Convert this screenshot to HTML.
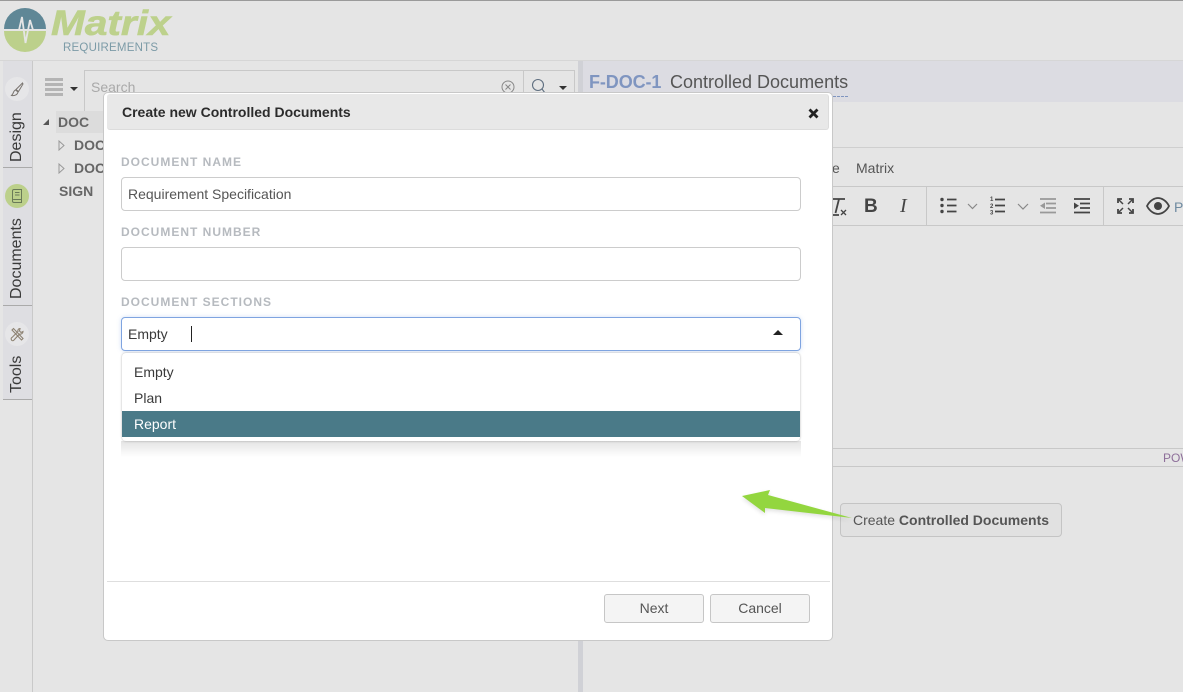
<!DOCTYPE html>
<html>
<head>
<meta charset="utf-8">
<style>
html,body{margin:0;padding:0;}
body{width:1183px;height:692px;overflow:hidden;position:relative;background:#e5e5e5;font-family:"Liberation Sans",sans-serif;color:#333;font-size:14px;}
.a{position:absolute;white-space:nowrap;}
.vt{position:absolute;white-space:nowrap;transform:rotate(-90deg);transform-origin:0 0;font-size:16px;line-height:18px;color:#3a3a3a;}
.lab{position:absolute;left:121px;font-size:12px;font-weight:bold;letter-spacing:1px;color:#b6babf;line-height:14px;}
.inp{position:absolute;left:121px;width:678px;height:32px;background:#fff;border:1px solid #ccc;border-radius:4px;}
.btn{position:absolute;top:594px;width:98px;height:27px;border:1px solid #c6c6c6;border-radius:3px;background:#f4f4f4;text-align:center;line-height:27px;color:#555;font-size:14px;}
.opt{position:absolute;left:134px;font-size:14px;line-height:16px;color:#3a3a3a;}
</style>
</head>
<body>
<div class="a" style="left:0;top:0;width:1183px;height:1px;background:#9a9a9a"></div>
<div class="a" style="left:0;top:60px;width:1183px;height:1px;background:#d6d6d6"></div>

<!-- logo -->
<svg class="a" style="left:0;top:4px" width="50" height="50" viewBox="0 0 50 50">
<path d="M4 27A21 21 0 0 0 46 27Z" fill="#bcd08b"/>
<path d="M4 25A21 21 0 0 1 46 25Z" fill="#5f8796"/>
<path d="M4 26H19L22 13 25.500 39 30 16 33 26H46" fill="#5f8796" fill-opacity="0" stroke="#e5e5e5" stroke-width="1.800" stroke-linejoin="miter"/>
</svg>
<div class="a" style="left:51px;top:5px;font-size:35px;line-height:38px;font-weight:bold;font-style:italic;color:#bdd18c;transform:scaleX(1.16);transform-origin:0 0;-webkit-text-stroke:.6px #bdd18c">Matrix</div>
<div class="a" style="left:63px;top:42px;font-size:11.5px;line-height:12px;color:#7c9ba7;letter-spacing:.22px">REQUIREMENTS</div>

<!-- sidebar -->
<div class="a" style="left:3px;top:61px;width:29px;height:339px;background:#dedee2"></div>
<div class="a" style="left:32px;top:61px;width:1px;height:631px;background:#c9c9c9"></div>
<div class="a" style="left:3px;top:167px;width:29px;height:1px;background:#aaa"></div>
<div class="a" style="left:3px;top:305px;width:29px;height:1px;background:#aaa"></div>
<div class="a" style="left:3px;top:399px;width:29px;height:1px;background:#aaa"></div>
<div class="a" style="left:5px;top:77px;width:24px;height:24px;border-radius:50%;background:#e6e6e8"></div>
<div class="a" style="left:5px;top:184px;width:24px;height:24px;border-radius:50%;background:#bcd08b"></div>
<div class="a" style="left:5px;top:322px;width:24px;height:24px;border-radius:50%;background:#e6e6e8"></div>
<svg class="a" style="left:5px;top:77px" width="24" height="24" viewBox="0 0 24 24" fill="none" stroke="#7a7570" stroke-width="1"><path d="M17.500 6 18 7 13.500 14.500 11 12.500ZM10.500 13C9 13.500 8.500 15 8 16.500 7.500 17.500 7 18 6.500 18.500 9 19 12.500 18 13 15Z"/></svg>
<svg class="a" style="left:5px;top:184px" width="24" height="24" viewBox="0 0 24 24" fill="none" stroke="#6a7a58" stroke-width="1"><path d="M7.500 7C7.500 6 8 5.500 9 5.500H16.500V18.500H9C8 18.500 7.500 18 7.500 17ZM7.500 16C7.500 15.500 8 15.500 9 15.500H16.500M10 8.500H14.500M10 11H14.500"/></svg>
<svg class="a" style="left:5px;top:322px" width="24" height="24" viewBox="0 0 24 24" fill="none" stroke="#8d8272" stroke-width="1.100"><path d="M7 8 8.500 6.500 18 16.500 16.500 18ZM15 6.500C13.500 6.500 12.500 8 13 9.500L7 15.500C6 15.500 6 17 6.500 18S8.500 19 9 18L14.500 12C16 12.500 18 11.500 18 9.500L16 10.500 14.500 9Z"/></svg>
<div class="vt" style="left:8px;top:162px">Design</div>
<div class="vt" style="left:8px;top:299px">Documents</div>
<div class="vt" style="left:8px;top:393px">Tools</div>

<!-- tree toolbar -->
<div class="a" style="left:45px;top:78px;width:18px;height:3px;background:#b4b4b4;box-shadow:0 5px 0 #b4b4b4,0 10px 0 #b4b4b4,0 15px 0 #b4b4b4"></div>
<div class="a" style="left:70px;top:87px;width:0;height:0;border:4px solid transparent;border-top-color:#333;border-bottom:0"></div>
<div class="a" style="left:84px;top:70px;width:489px;height:40px;border:1px solid #c8c8c8;box-sizing:content-box"></div>
<div class="a" style="left:91px;top:79px;font-size:14px;line-height:16px;color:#a9a9a9">Search</div>
<div class="a" style="left:523px;top:70px;width:1px;height:30px;background:#c8c8c8"></div>
<svg class="a" style="left:500px;top:79px" width="16" height="16" viewBox="0 0 16 16" fill="none" stroke="#888"><circle cx="8" cy="8" r="6"/><path d="M5.500 5.500 10.500 10.500M10.500 5.500 5.500 10.500"/></svg>
<svg class="a" style="left:530px;top:78px" width="18" height="18" viewBox="0 0 18 18" fill="none" stroke="#5f6f80" stroke-width="1.100"><circle cx="8" cy="7" r="5.500"/><path d="M12 11 15 15"/></svg>
<div class="a" style="left:559px;top:86px;width:0;height:0;border:4px solid transparent;border-top-color:#333;border-bottom:0"></div>

<!-- tree -->
<div class="a" style="left:56px;top:111px;width:60px;height:22px;background:#dcdcdc"></div>
<div class="a" style="left:43px;top:119px;width:0;height:0;border-style:solid;border-width:0 0 6px 6px;border-color:transparent transparent #555 transparent"></div>
<div class="a" style="left:58px;top:114px;font-size:14px;line-height:16px;font-weight:bold;color:#666">DOC</div>
<svg class="a" style="left:58px;top:140px" width="8" height="11"><path d="M1 1 6 5.500 1 10Z" fill="none" stroke="#999"/></svg>
<svg class="a" style="left:58px;top:163px" width="8" height="11"><path d="M1 1 6 5.500 1 10Z" fill="none" stroke="#999"/></svg>
<div class="a" style="left:74px;top:137px;font-size:14px;line-height:16px;font-weight:bold;color:#666">DOC</div>
<div class="a" style="left:74px;top:160px;font-size:14px;line-height:16px;font-weight:bold;color:#666">DOC</div>
<div class="a" style="left:59px;top:183px;font-size:14px;line-height:16px;font-weight:bold;color:#666">SIGN</div>

<!-- splitter -->
<div class="a" style="left:578px;top:61px;width:5px;height:631px;background:#d0d1d6"></div>

<!-- right panel -->
<div class="a" style="left:583px;top:61px;width:600px;height:41px;background:#dcdce2"></div>
<div class="a" style="left:589px;top:72px;font-size:18px;line-height:20px;font-weight:bold;color:#7f95c0;letter-spacing:-.1px">F-DOC-1</div>
<div class="a" style="left:670px;top:72px;font-size:18px;line-height:20px;color:#555">Controlled Documents</div>
<div class="a" style="left:833px;top:96px;width:15px;border-top:1px dashed #7f95c0"></div>
<div class="a" style="left:832px;top:147px;width:351px;height:1px;background:#cfcfcf"></div>
<div class="a" style="left:832px;top:186px;width:351px;height:1px;background:#c8c8c8"></div>
<div class="a" style="left:832px;top:225px;width:351px;height:1px;background:#c8c8c8"></div>
<div class="a" style="left:832px;top:448px;width:351px;height:1px;background:#c8c8c8"></div>
<div class="a" style="left:832px;top:466px;width:351px;height:1px;background:#c8c8c8"></div>
<div class="a" style="left:926px;top:186px;width:1px;height:39px;background:#c8c8c8"></div>
<div class="a" style="left:1103px;top:186px;width:1px;height:39px;background:#c8c8c8"></div>
<div class="a" style="left:832px;top:160px;font-size:14px;line-height:16px;color:#555">e</div>
<div class="a" style="left:856px;top:160px;font-size:14px;line-height:16px;color:#555">Matrix</div>
<div class="a" style="left:1163px;top:451px;font-size:12px;line-height:14px;color:#8e6f9a">POW</div>
<svg class="a" style="left:832px;top:190px" width="351" height="32" viewBox="0 0 351 32">
<path d="M0 9H13M7 9 3.500 23M0 25H7" fill="none" stroke="#444" stroke-width="1.800"/>
<path d="M9 20 14 25M14 20 9 25" fill="none" stroke="#444" stroke-width="1.300"/>
<text x="32" y="22" font-family="Liberation Sans" font-size="19" font-weight="bold" fill="#444">B</text>
<text x="68" y="22" font-family="Liberation Serif" font-size="20" font-style="italic" fill="#444">I</text>
<g fill="#444"><circle cx="110" cy="9.500" r="1.700"/><circle cx="110" cy="15.500" r="1.700"/><circle cx="110" cy="21.500" r="1.700"/></g>
<path d="M115 9.500H124.500M115 15.500H124.500M115 21.500H124.500" stroke="#444" stroke-width="1.800"/>
<path d="M136 14 140.500 18.500 145 14" fill="none" stroke="#888" stroke-width="1.200"/>
<text x="158" y="11" font-family="Liberation Sans" font-size="6" font-weight="bold" fill="#444">1</text>
<text x="158" y="18" font-family="Liberation Sans" font-size="6" font-weight="bold" fill="#444">2</text>
<text x="158" y="24.500" font-family="Liberation Sans" font-size="6" font-weight="bold" fill="#444">3</text>
<path d="M163 9.500H173M163 15.500H173M163 21.500H173" stroke="#444" stroke-width="1.800"/>
<path d="M186 14 191 19 196 14" fill="none" stroke="#888" stroke-width="1.200"/>
<path d="M208 9H224M214 13.500H224M214 18H224M208 22.500H224" stroke="#999" stroke-width="1.800"/>
<path d="M213 12.500 208 15.700 213 19Z" fill="#999"/>
<path d="M242 9H258M248 13.500H258M248 18H258M242 22.500H258" stroke="#444" stroke-width="1.800"/>
<path d="M242 12.500 247 15.700 242 19Z" fill="#444"/>
<path d="M286 13V9H290M297 9H301V13M286 19V23H290M297 23H301V19" fill="none" stroke="#444" stroke-width="1.800"/>
<path d="M287 10 291 14M300 10 296 14M287 22 291 18M300 22 296 18" stroke="#444" stroke-width="1.500"/>
<path d="M315 16C318 10 323 8 326 8S334 10 337 16C334 22 329 24 326 24S318 22 315 16Z" fill="none" stroke="#444" stroke-width="1.800"/>
<circle cx="326" cy="16" r="4" fill="#444"/>
<text x="342" y="22" font-family="Liberation Sans" font-size="14" fill="#6e8aa0">P</text>
</svg>

<!-- create button + arrow -->
<div class="a" style="left:840px;top:503px;width:220px;height:32px;border:1px solid #c4c4c4;border-radius:4px;background:#e1e1e1;line-height:32px;font-size:14px;color:#555;text-indent:12px">Create <b>Controlled Documents</b></div>

<!-- modal -->
<div class="a" style="left:103px;top:92px;width:728px;height:547px;background:#fff;border:1px solid #c8c8c8;border-radius:5px"></div>
<div class="a" style="left:107px;top:94px;width:721px;height:35px;background:#e8e8e8;border-bottom:1px solid #dcdcdc;border-right:1px solid #dcdcdc;border-radius:3px"></div>
<div class="a" style="left:122px;top:104px;font-size:14px;line-height:16px;font-weight:bold;color:#2b2b2b">Create new Controlled Documents</div>
<svg class="a" style="left:808px;top:108px" width="11" height="11"><path d="M1.500 1.500 9.500 9.500M9.500 1.500 1.500 9.500" stroke="#222" stroke-width="2.800"/></svg>

<div class="lab" style="top:155px">DOCUMENT NAME</div>
<div class="inp" style="top:177px"></div>
<div class="a" style="left:128px;top:186px;font-size:14px;line-height:16px;color:#555">Requirement Specification</div>

<div class="lab" style="top:225px">DOCUMENT NUMBER</div>
<div class="inp" style="top:247px"></div>

<div class="lab" style="top:295px">DOCUMENT SECTIONS</div>
<div class="inp" style="top:317px;border-color:#7fa4e0;box-shadow:0 0 4px rgba(120,160,225,.35)"></div>
<div class="a" style="left:128px;top:326px;font-size:14px;line-height:16px;color:#3a3a3a">Empty</div>
<div class="a" style="left:191px;top:326px;width:1px;height:16px;background:#222"></div>
<div class="a" style="left:773px;top:330px;width:0;height:0;border-left:5px solid transparent;border-right:5px solid transparent;border-bottom:5px solid #222"></div>

<div class="a" style="left:121px;top:441px;width:680px;height:16px;background:linear-gradient(to bottom,rgba(0,0,0,.11),rgba(0,0,0,0))"></div>
<div class="a" style="left:122px;top:353px;width:678px;height:88px;background:#fff;border-radius:4px;box-shadow:0 0 2px rgba(0,0,0,.3)"></div>
<div class="opt" style="top:364px">Empty</div>
<div class="opt" style="top:390px">Plan</div>
<div class="a" style="left:122px;top:411px;width:678px;height:26px;background:#4a7a88"></div>
<div class="opt" style="top:416px;color:#fff">Report</div>

<div class="a" style="left:107px;top:581px;width:723px;height:1px;background:#dedede"></div>
<div class="btn" style="left:604px">Next</div>
<div class="btn" style="left:710px">Cancel</div>

<!-- arrow -->
<svg class="a" style="left:725px;top:475px" width="140" height="65" viewBox="-10 -10 140 65">
<defs><filter id="s" x="-20%" y="-50%" width="140%" height="200%"><feGaussianBlur stdDeviation="2"/></filter></defs>
<path d="M7 13 35 7 33 12 117 35 30 25 30 30Z" fill="#000" opacity=".12" filter="url(#s)"/>
<path d="M7 11 35 5 33 10 117 33 30 23 30 28Z" fill="#93d63f"/>
</svg>
</body>
</html>
